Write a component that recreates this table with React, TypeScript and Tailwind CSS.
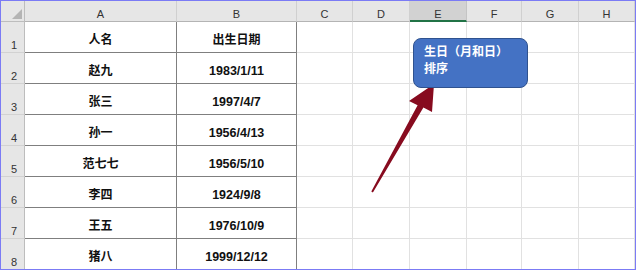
import React from "react";

const COLS = [
  { key: "A", w: "w-[152px]" },
  { key: "B", w: "w-[120px]" },
  { key: "C", w: "w-[56px]" },
  { key: "D", w: "w-[57px]" },
  { key: "E", w: "w-[57px]" },
  { key: "F", w: "w-[55px]" },
  { key: "G", w: "w-[57px]" },
  { key: "H", w: "w-[56px]" },
];

const DATA: [string, string][] = [
  ["人名", "出生日期"],
  ["赵九", "1983/1/11"],
  ["张三", "1997/4/7"],
  ["孙一", "1956/4/13"],
  ["范七七", "1956/5/10"],
  ["李四", "1924/9/8"],
  ["王五", "1976/10/9"],
  ["猪八", "1999/12/12"],
];

const font = "font-['Liberation_Sans','Noto_Sans_CJK_SC',sans-serif]";

export default function App() {
  return (
    <div className="bg-white w-[640px] h-[272px]">
      <div
        className={`relative w-[636px] h-[270px] border border-[#7b7bf5] overflow-hidden bg-white ${font}`}
      >
        {/* column header row */}
        <div className="flex h-[21px]">
          <div className="w-[24px] h-full bg-[#e6e6e6] border-r border-b border-[#bdbdbd] flex items-end justify-end pr-[2px] pb-[2px]">
            <svg width="10" height="10" viewBox="0 0 10 10">
              <polygon points="10,0 10,10 0,10" fill="#b4b4b4" />
            </svg>
          </div>
          {COLS.map((c) =>
            c.key === "E" ? (
              <div
                key={c.key}
                className={`${c.w} h-full bg-[#d2d2d2] border-r border-[#c4c4c4] border-b-2 border-b-[#217346] flex items-end justify-center text-[11px] leading-[12px] text-[#333] pb-[0px]`}
              >
                {c.key}
              </div>
            ) : (
              <div
                key={c.key}
                className={`${c.w} h-full bg-[#e6e6e6] border-r border-b border-r-[#d0d0d0] border-b-[#b4b4b4] flex items-end justify-center text-[11px] leading-[12px] text-[#333] pb-[1px]`}
              >
                {c.key}
              </div>
            )
          )}
        </div>
        {/* data rows */}
        {DATA.map((row, ri) => (
          <div key={ri} className="flex h-[31px]">
            <div className="w-[24px] h-full bg-[#e6e6e6] border-r border-b border-r-[#bdbdbd] border-b-[#d2d2d2] flex items-end pl-[10px] text-[11px] leading-[12px] text-[#333] pb-[1px]">
              {ri + 1}
            </div>
            <div className="w-[152px] h-full border-r border-b border-[#7f7f7f] flex items-center justify-center pt-[6px] text-[12px] leading-[14px] font-bold text-[#111]">
              {row[0]}
            </div>
            <div
              className={`w-[120px] h-full border-r border-b border-[#7f7f7f] flex items-center justify-center pt-[6px] ${
                ri === 0 ? "text-[12px]" : "text-[12.5px]"
              } leading-[14px] font-bold text-[#111]`}
            >
              {row[1]}
            </div>
            {COLS.slice(2).map((c) => (
              <div
                key={c.key}
                className={`${c.w} h-full border-r border-b border-[#e1e1e1]`}
              />
            ))}
          </div>
        ))}

        {/* arrow */}
        <svg
          className="absolute left-[-1px] top-[-1px] pointer-events-none"
          width="640"
          height="272"
          viewBox="0 0 640 272"
        >
          <polygon
            points="371.3,191.6 417.6,105.2 409,101 434,84 432,112 423.4,107.6 372.9,192.4"
            fill="#870b1f"
          />
        </svg>

        {/* callout */}
        <div className="absolute left-[412px] top-[37px] w-[115px] h-[50px] rounded-[8px] bg-[#4472c4] border border-[#2f528f] pl-[10px] pt-[5px] text-white text-[12px] leading-[17px] font-bold">
          <div>生日（月和日）</div>
          <div>排序</div>
        </div>
      </div>
    </div>
  );
}
